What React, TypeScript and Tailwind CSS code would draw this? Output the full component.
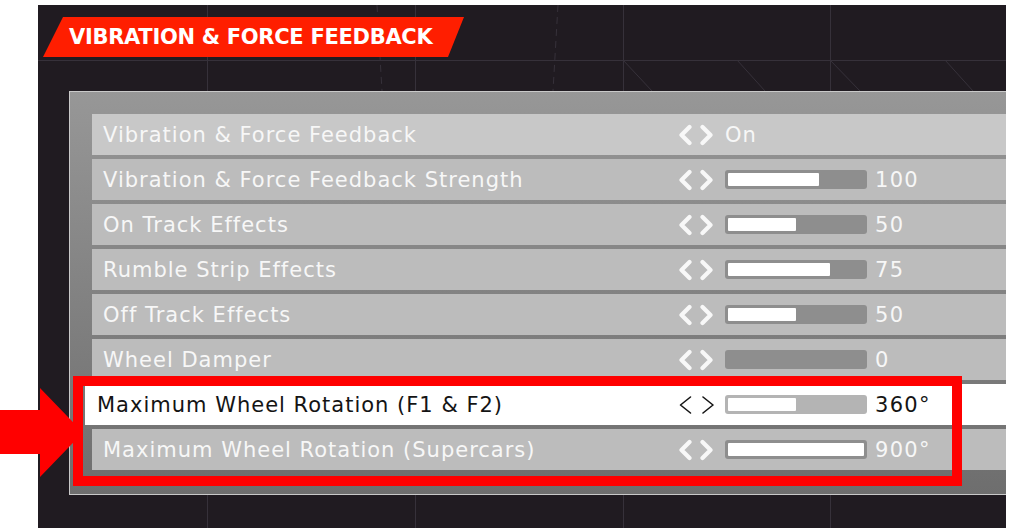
import React from "react";

type Row = {
  label: string;
  value: string;
  fill?: number;
  text?: boolean;
  first?: boolean;
  selected?: boolean;
};

const rows: Row[] = [
  { label: "Vibration & Force Feedback", value: "On", text: true, first: true },
  { label: "Vibration & Force Feedback Strength", value: "100", fill: 91 },
  { label: "On Track Effects", value: "50", fill: 68 },
  { label: "Rumble Strip Effects", value: "75", fill: 102 },
  { label: "Off Track Effects", value: "50", fill: 68 },
  { label: "Wheel Damper", value: "0", fill: 0 },
  { label: "Maximum Wheel Rotation (F1 & F2)", value: "360°", fill: 68, selected: true },
  { label: "Maximum Wheel Rotation (Supercars)", value: "900°", fill: 136 },
];

function Chevrons({ thin }: { thin?: boolean }) {
  const color = thin ? "#141414" : "#f8f8f8";
  const sw = thin ? 1.6 : 4.2;
  return (
    <div className="flex shrink-0 items-center gap-[8px]">
      <svg width="14" height="22" viewBox="0 0 14 22">
        <polyline
          points={thin ? "12.5,3 2.5,11 12.5,19" : "11.5,3 3.5,11 11.5,19"}
          fill="none"
          stroke={color}
          strokeWidth={sw}
          strokeLinecap="round"
          strokeLinejoin="round"
        />
      </svg>
      <svg width="14" height="22" viewBox="0 0 14 22">
        <polyline
          points={thin ? "3,3 13,11 3,19" : "2.5,3 10.5,11 2.5,19"}
          fill="none"
          stroke={color}
          strokeWidth={sw}
          strokeLinecap="round"
          strokeLinejoin="round"
        />
      </svg>
    </div>
  );
}

function Bar({ fill, selected }: { fill: number; selected?: boolean }) {
  return (
    <div
      className={
        "ml-[11px] h-[19px] w-[142px] shrink-0 rounded-[3px] p-[3px] " +
        (selected ? "bg-[#b4b4b4]" : "bg-[#8e8e8e]")
      }
    >
      <div className="h-full rounded-[1px] bg-white" style={{ width: fill }} />
    </div>
  );
}

function SettingRow({ row }: { row: Row }) {
  const sel = row.selected;
  return (
    <div
      className={
        "flex h-[41px] items-center " +
        (sel
          ? "-ml-[7px] bg-white pl-[12px] text-[#141414]"
          : "pl-[11px] text-[#f7f7f7] " + (row.first ? "bg-[#c8c8c8]" : "bg-[#bcbcbc]"))
      }
    >
      <div
        className={
          "shrink-0 whitespace-nowrap pt-[2px] text-[21px] leading-none tracking-[1px] " +
          (sel ? "w-[581px]" : "w-[575px]")
        }
      >
        {row.label}
      </div>
      <Chevrons thin={sel} />
      {row.text ? (
        <div className="ml-[11px] pt-[2px] text-[21px] leading-none tracking-[1px]">{row.value}</div>
      ) : (
        <>
          <Bar fill={row.fill ?? 0} selected={sel} />
          <div className="ml-[8px] pt-[2px] text-[21px] leading-none tracking-[1.3px]">{row.value}</div>
        </>
      )}
    </div>
  );
}

export default function App() {
  return (
    <div className="relative h-[528px] w-[1011px] overflow-hidden bg-white pl-[38px] pt-[5px] font-['DejaVu_Sans',sans-serif]">
      <div className="relative h-[523px] w-[968px] overflow-hidden bg-[#201b21] pt-[12px]">
        <svg
          className="absolute inset-0"
          width="968"
          height="523"
          viewBox="0 0 968 523"
          fill="none"
          stroke="#36313a"
          strokeWidth="1"
        >
          <line x1="0" y1="55.5" x2="968" y2="55.5" />
          <line x1="169.5" y1="0" x2="169.5" y2="523" />
          <line x1="377.5" y1="0" x2="377.5" y2="523" />
          <line x1="585.5" y1="0" x2="585.5" y2="523" />
          <line x1="792.5" y1="0" x2="792.5" y2="523" />
          <line x1="339" y1="0" x2="344" y2="86" strokeDasharray="7 5" />
          <line x1="520" y1="0" x2="515" y2="86" strokeDasharray="7 5" />
          <line x1="585" y1="55" x2="614" y2="86" />
          <line x1="699" y1="55" x2="727" y2="86" />
          <line x1="792" y1="55" x2="822" y2="86" />
          <line x1="907" y1="55" x2="935" y2="86" />
        </svg>

        <div className="relative ml-[5px] flex h-[40px] w-[421px] items-center bg-[#ff1e00] pl-[26px] [clip-path:polygon(20px_0,100%_0,calc(100%_-_16px)_100%,0_100%)]">
          <span className="whitespace-nowrap text-[21px] font-bold leading-none tracking-[-0.3px] text-white">
            VIBRATION &amp; FORCE FEEDBACK
          </span>
        </div>

        <div className="relative ml-[31px] mt-[34px] w-[960px] border border-[#c9c9c9] bg-linear-to-b from-[#979797] to-[#6e6e6e] pb-[24px] pl-[22px] pt-[22px]">
          <div className="flex flex-col gap-[4px]">
            {rows.map((r) => (
              <SettingRow key={r.label} row={r} />
            ))}
          </div>
        </div>
      </div>

      <div className="absolute left-[73px] top-[376px] h-[110px] w-[889px] border-[10px] border-[#ff0000]" />
      <svg className="absolute left-0 top-[388px]" width="84" height="90" viewBox="0 0 84 90">
        <polygon points="0,22 40,22 40,0 83,44.5 40,89 40,66 0,66" fill="#ff0000" />
      </svg>
    </div>
  );
}
